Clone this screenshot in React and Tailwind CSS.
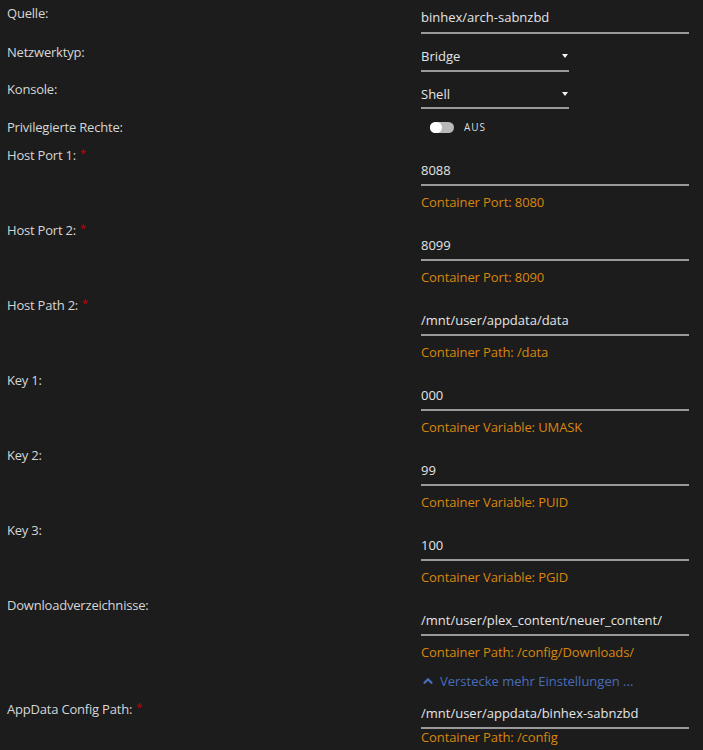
import { ChevronUp } from "lucide-react"

const font = { fontFamily: '"Open Sans", "DejaVu Sans", sans-serif' }

const Label = ({ text, required, className = "" }) => (
  <div className={`w-[421px] shrink-0 pl-[7px] leading-5 text-[13px] tracking-[-0.2px] text-[#d6d6d6] ${className}`}>
    {text}
    {required && <span className="ml-[4px] relative -top-[3px] text-[11px] text-[#cc0000]">*</span>}
  </div>
)

const SelectArrow = () => (
  <svg width="6" height="6" viewBox="0 0 6 6" className="mr-[1px]">
    <path d="M0 1 L6 1 L3 5 Z" fill="#f2f2f2" />
  </svg>
)

// typical host port / path / variable block, 75px high
const Field = ({ label, required, value, hint }) => (
  <div className="flex mb-[8px]">
    <Label text={label} required={required} />
    <div className="w-[268px]">
      <div className="pt-[15px] pb-[4px] leading-5 text-[13px] text-[#e4e4e4] border-b-2 border-[#9a9a9a]">
        {value}
      </div>
      <div className="mt-[6px] leading-5 text-[13px] tracking-[-0.1px] text-[#d9860c]">{hint}</div>
    </div>
  </div>
)

export default function App() {
  return (
    <div className="min-h-screen w-[703px] bg-[#1c1c1c] overflow-hidden" style={font}>
      {/* Quelle */}
      <div className="flex">
        <Label text="Quelle:" className="pt-[3px]" />
        <div className="w-[268px] pt-[7px] pb-[5px] leading-5 text-[13px] text-[#e4e4e4] border-b-2 border-[#9a9a9a]">
          binhex/arch-sabnzbd
        </div>
      </div>

      {/* Netzwerktyp */}
      <div className="flex mt-[5px]">
        <Label text="Netzwerktyp:" className="pt-[3px]" />
        <div className="w-[148px] pt-[7px] pb-[4px] flex items-center justify-between leading-5 text-[13px] text-[#e4e4e4] border-b-2 border-[#9a9a9a]">
          <span>Bridge</span>
          <SelectArrow />
        </div>
      </div>

      {/* Konsole */}
      <div className="flex mt-[4px]">
        <Label text="Konsole:" className="pt-[3px]" />
        <div className="w-[148px] pt-[8px] pb-[3px] flex items-center justify-between leading-5 text-[13px] text-[#e4e4e4] border-b-2 border-[#9a9a9a]">
          <span>Shell</span>
          <SelectArrow />
        </div>
      </div>

      {/* Privilegierte Rechte */}
      <div className="flex mt-[8px] mb-[8px]">
        <Label text="Privilegierte Rechte:" />
        <div className="flex items-center h-5 pl-[9px] pt-[1px]">
          <div className="w-[24px] h-[11px] rounded-full bg-[#b9b9b9] flex items-center">
            <div className="w-[12px] h-[11px] rounded-full bg-white" />
          </div>
          <span className="ml-[10px] text-[10px] tracking-[1px] text-[#dcdcdc]">AUS</span>
        </div>
      </div>

      <Field label="Host Port 1:" required value="8088" hint="Container Port: 8080" />
      <Field label="Host Port 2:" required value="8099" hint="Container Port: 8090" />
      <Field label="Host Path 2:" required value="/mnt/user/appdata/data" hint="Container Path: /data" />
      <Field label="Key 1:" value="000" hint="Container Variable: UMASK" />
      <Field label="Key 2:" value="99" hint="Container Variable: PUID" />
      <Field label="Key 3:" value="100" hint="Container Variable: PGID" />

      {/* Downloadverzeichnisse */}
      <div className="flex">
        <Label text="Downloadverzeichnisse:" />
        <div className="w-[268px]">
          <div className="pt-[15px] pb-[4px] leading-5 text-[13px] text-[#e4e4e4] border-b-2 border-[#9a9a9a]">
            /mnt/user/plex_content/neuer_content/
          </div>
          <div className="mt-[6px] leading-5 text-[13px] tracking-[-0.1px] text-[#d9860c]">Container Path: /config/Downloads/</div>
          <div className="mt-[9px] flex items-center leading-5 text-[13px] text-[#486dba]">
            <ChevronUp size={14} strokeWidth={4} className="ml-[0px] mr-[5px]" />
            Verstecke mehr Einstellungen ...
          </div>
        </div>
      </div>

      {/* AppData Config Path */}
      <div className="flex mt-[8px]">
        <Label text="AppData Config Path:" required />
        <div className="w-[268px]">
          <div className="pt-[4px] pb-[4px] leading-5 text-[13px] text-[#e4e4e4] border-b-2 border-[#9a9a9a]">
            /mnt/user/appdata/binhex-sabnzbd
          </div>
          <div className="leading-4 text-[13px] tracking-[-0.1px] text-[#d9860c]">Container Path: /config</div>
        </div>
      </div>
    </div>
  )
}
